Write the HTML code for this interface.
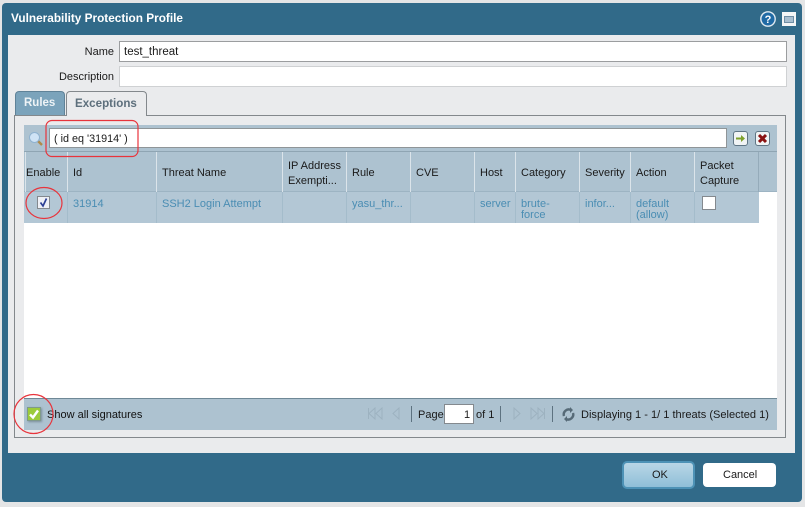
<!DOCTYPE html>
<html><head><meta charset="utf-8"><style>
html,body{margin:0;padding:0;width:805px;height:507px;overflow:hidden;background:#e4e5e6}
body{font-family:"Liberation Sans",sans-serif;font-size:11px;color:#1a1a1a;position:relative}
div{position:absolute;box-sizing:border-box}
.t{white-space:nowrap;line-height:13px}
.l{color:#4a8db3}
.s{width:1px;top:152px;height:40px;background:#dbe4ea}
.r{width:1px;top:192px;height:31px;background:#a4bccb}
</style></head><body>
<div style="left:2px;top:3px;width:800px;height:499px;background:#316a89;border-radius:4px"></div>
<div class="t" style="left:11px;top:12px;color:#fff;font-weight:bold;font-size:11.8px">Vulnerability Protection Profile</div>
<svg style="position:absolute;left:760px;top:11px" width="16" height="16"><circle cx="8" cy="8" r="7.2" fill="#1f6aa5" stroke="#dfe9f0" stroke-width="1.4"/><text x="8" y="12" font-size="11" font-weight="bold" fill="#fff" text-anchor="middle" font-family="Liberation Sans">?</text></svg>
<div style="left:782px;top:12px;width:14px;height:14px;background:#f4f6f7"></div>
<div style="left:784px;top:16px;width:10px;height:7px;background:#a9bfd0;border:1px solid #6f8ea5"></div>
<div style="left:8px;top:35px;width:787px;height:418px;background:#eaebed"></div>

<div class="t" style="right:691px;top:46px">Name</div>
<div class="t" style="right:691px;top:71px">Description</div>
<div style="left:119px;top:41px;width:668px;height:21px;background:#fff;border:1px solid #9b9d9f"></div>
<div class="t" style="left:124px;top:46px;font-size:11.5px">test_threat</div>
<div style="left:119px;top:66px;width:668px;height:21px;background:#fff;border:1px solid #cfd1d3"></div>

<div style="left:14px;top:115px;width:772px;height:323px;border:1px solid #83888c;background:#eaebed"></div>
<div style="left:15px;top:91px;width:50px;height:24px;background:#7ba3bb;border:1px solid #5f8298;border-bottom:0;border-radius:4px 4px 0 0"></div>
<div class="t" style="left:24px;top:97px;color:#eef3f6;font-weight:bold;font-size:11.5px">Rules</div>
<div style="left:66px;top:91px;width:81px;height:25px;background:#eaebed;border:1px solid #83888c;border-bottom:0;border-radius:4px 4px 0 0"></div>
<div class="t" style="left:75px;top:97px;color:#5d6f7c;font-weight:bold;font-size:11.6px">Exceptions</div>

<div style="left:24px;top:125px;width:753px;height:305px;background:#fff"></div>
<div style="left:24px;top:125px;width:753px;height:27px;background:#adc2d0"></div>
<svg style="position:absolute;left:28px;top:131px" width="16" height="16"><line x1="9" y1="9" x2="14" y2="14" stroke="#b08a4a" stroke-width="2.4"/><circle cx="6.500" cy="6.500" r="5" fill="#cfe3f5" stroke="#8fb2d0"/></svg>
<div style="left:49px;top:128px;width:678px;height:20px;background:#fff;border:1px solid #8f9598"></div>
<div class="t" style="left:54px;top:133px;font-size:10.800px">( id eq '31914' )</div>
<div style="left:733px;top:131px;width:15px;height:15px;background:#f1f4f5;border:1px solid #607685;border-radius:3px"></div>
<svg style="position:absolute;left:733px;top:131px" width="15" height="15"><path d="M3 7.500H9" stroke="#7fa12c" stroke-width="2"/><path d="M8 4L12 7.500L8 11Z" fill="#7fa12c"/></svg>
<div style="left:755px;top:131px;width:15px;height:15px;background:#f1f4f5;border:1px solid #607685;border-radius:3px"></div>
<svg style="position:absolute;left:755px;top:131px" width="15" height="15"><path d="M4 4L11 11M11 4L4 11" stroke="#8a1212" stroke-width="3"/></svg>

<div style="left:24px;top:151px;width:753px;height:41px;background:#adc2d0;border-top:1px solid #8fa5b3;border-bottom:1px solid #9db4c3"></div>
<div class="s" style="left:25px"></div><div class="s" style="left:67px"></div><div class="s" style="left:156px"></div><div class="s" style="left:282px"></div><div class="s" style="left:346px"></div><div class="s" style="left:410px"></div><div class="s" style="left:474px"></div><div class="s" style="left:515px"></div><div class="s" style="left:579px"></div><div class="s" style="left:630px"></div><div class="s" style="left:694px"></div><div class="s" style="left:758px;background:#95abba"></div>
<div style="left:24px;top:192px;width:735px;height:31px;background:#b3c7d5"></div>
<div class="r" style="left:67px"></div><div class="r" style="left:156px"></div><div class="r" style="left:282px"></div><div class="r" style="left:346px"></div><div class="r" style="left:410px"></div><div class="r" style="left:474px"></div><div class="r" style="left:515px"></div><div class="r" style="left:579px"></div><div class="r" style="left:630px"></div><div class="r" style="left:694px"></div>

<div class="t" style="left:26px;top:167px">Enable</div>
<div class="t" style="left:73px;top:167px">Id</div>
<div class="t" style="left:162px;top:167px">Threat Name</div>
<div class="t" style="left:288px;top:159px;line-height:15px">IP Address<br>Exempti...</div>
<div class="t" style="left:352px;top:167px">Rule</div>
<div class="t" style="left:416px;top:167px">CVE</div>
<div class="t" style="left:480px;top:167px">Host</div>
<div class="t" style="left:521px;top:167px">Category</div>
<div class="t" style="left:585px;top:167px">Severity</div>
<div class="t" style="left:636px;top:167px">Action</div>
<div class="t" style="left:700px;top:159px;line-height:15px">Packet<br>Capture</div>

<div style="left:37px;top:196px;width:13px;height:13px;background:#eef0f6;border:1px solid #84898e"></div>
<svg style="position:absolute;left:37px;top:196px" width="13" height="13"><path d="M3.500 6.500L6 10L9.500 2.500" fill="none" stroke="#2c3f94" stroke-width="1.700"/></svg>
<div class="t l" style="left:73px;top:198px">31914</div>
<div class="t l" style="left:162px;top:198px">SSH2 Login Attempt</div>
<div class="t l" style="left:352px;top:198px">yasu_thr...</div>
<div class="t l" style="left:480px;top:198px">server</div>
<div class="t l" style="left:521px;top:199px;line-height:11px">brute-<br>force</div>
<div class="t l" style="left:585px;top:198px">infor...</div>
<div class="t l" style="left:636px;top:199px;line-height:11px">default<br>(allow)</div>
<div style="left:702px;top:196px;width:14px;height:14px;background:#fff;border:1px solid #84898e"></div>

<div style="left:24px;top:398px;width:753px;height:32px;background:#adc2d0;border-top:1px solid #6f8896"></div>
<div style="left:27px;top:407px;width:14px;height:14px;background:#9ccb3b;border:1px solid #7f9a8a;box-shadow:1px 1px 2px #7b8f9c"></div>
<svg style="position:absolute;left:27px;top:407px" width="14" height="14"><path d="M3 7.500L6 10.500L11 3.500" fill="none" stroke="#fff" stroke-width="2.400"/></svg>
<div class="t" style="left:47px;top:409px;color:#111">Show all signatures</div>

<svg style="position:absolute;left:366px;top:405px" width="50" height="18" fill="none" stroke="#9db2c0"><path d="M2.500 3V14M9 3L3 8.500L9 14ZM16 3L10 8.500L16 14ZM33 3L27 8.500L33 14Z"/><path d="M45.500 1V17" stroke="#5d7280"/></svg>
<div class="t" style="left:418px;top:409px">Page</div>
<div style="left:444px;top:404px;width:30px;height:20px;background:#fff;border:1px solid #84898e"></div>
<div class="t" style="left:464px;top:409px">1</div>
<div class="t" style="left:476px;top:409px">of 1</div>
<svg style="position:absolute;left:500px;top:405px" width="56" height="18" fill="none" stroke="#9db2c0"><path d="M.5 1V17" stroke="#5d7280"/><path d="M14 3L20 8.500L14 14ZM31 3L37 8.500L31 14ZM38 3L44 8.500L38 14ZM44.500 3V14"/><path d="M52.500 1V17" stroke="#5d7280"/></svg>
<svg style="position:absolute;left:562px;top:407px" width="13" height="15" fill="none" stroke="#566a77" stroke-width="2.400"><path d="M2 9A5 5 0 0 1 9 3M11 6A5 5 0 0 1 4 12"/><path d="M8 0V6L11 3ZM5 9V15L2 12Z" fill="#566a77" stroke="none"/></svg>
<div class="t" style="left:581px;top:409px;font-size:11.050px">Displaying 1 - 1/ 1 threats (Selected 1)</div>

<div style="left:622px;top:461px;width:73px;height:28px;border-radius:5px;background:linear-gradient(#b9d6e6,#8fbfd8);border:2px solid #4d92b6"></div>
<div class="t" style="left:652px;top:469px">OK</div>
<div style="left:703px;top:463px;width:73px;height:24px;border-radius:4px;background:#fff"></div>
<div class="t" style="left:723px;top:469px">Cancel</div>

<svg style="position:absolute;left:0;top:0" width="805" height="507" fill="none" stroke="#e8343c" stroke-width="1.200"><rect x="46" y="120.500" width="92" height="36" rx="6"/><ellipse cx="44" cy="203" rx="18" ry="15.500"/><circle cx="33.500" cy="414" r="19.500"/></svg>
</body></html>
